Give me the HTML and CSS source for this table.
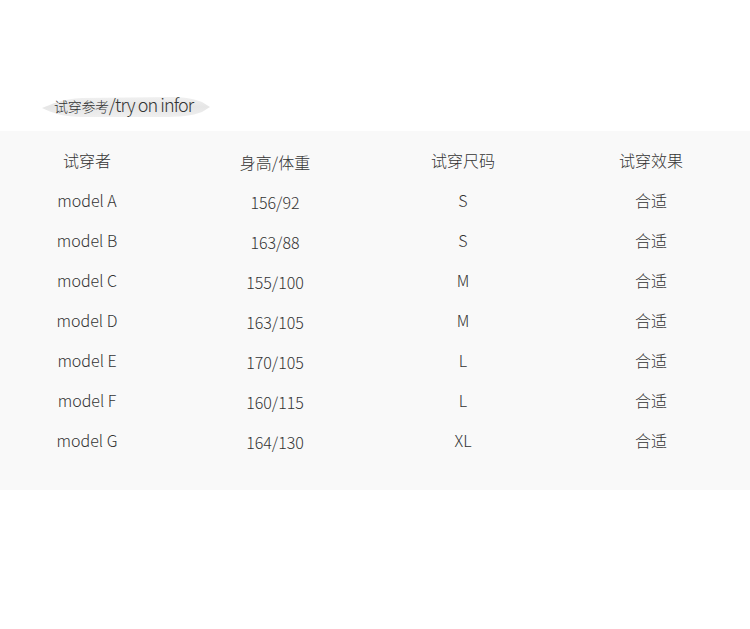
FILE: index.html
```html
<!DOCTYPE html>
<html lang="zh">
<head>
<meta charset="utf-8">
<link rel="stylesheet" href="styles.css">
</head>
<body>
<div class="page">
  <div class="title-wrap">
    <svg class="brush" width="168" height="24" viewBox="0 0 168 24" aria-hidden="true">
      <defs>
        <linearGradient id="g" x1="0" y1="0" x2="0" y2="1">
          <stop offset="0" stop-color="#f0f0f0"/>
          <stop offset="0.5" stop-color="#e6e6e6"/>
          <stop offset="1" stop-color="#efefef"/>
        </linearGradient>
      </defs>
      <path d="M0 13 C10 9 20 4 40 3 L130 2 C145 2 155 5 160 7 L168 12 L160 17 C150 21 138 22 120 22 L40 22 C22 22 10 18 0 13 Z" fill="url(#g)"/>
    </svg>
    <h2 class="title"><span class="cn">试穿参考</span><span class="en">/try on infor</span></h2>
  </div>
  <section class="panel">
    <div class="table">
      <div class="row head">
        <div class="cell">试穿者</div><div class="cell c2">身高/体重</div><div class="cell">试穿尺码</div><div class="cell">试穿效果</div>
      </div>
      <div class="row"><div class="cell">model A</div><div class="cell c2">156/92</div><div class="cell">S</div><div class="cell">合适</div></div>
      <div class="row"><div class="cell">model B</div><div class="cell c2">163/88</div><div class="cell">S</div><div class="cell">合适</div></div>
      <div class="row"><div class="cell">model C</div><div class="cell c2">155/100</div><div class="cell">M</div><div class="cell">合适</div></div>
      <div class="row"><div class="cell">model D</div><div class="cell c2">163/105</div><div class="cell">M</div><div class="cell">合适</div></div>
      <div class="row"><div class="cell">model E</div><div class="cell c2">170/105</div><div class="cell">L</div><div class="cell">合适</div></div>
      <div class="row"><div class="cell">model F</div><div class="cell c2">160/115</div><div class="cell">L</div><div class="cell">合适</div></div>
      <div class="row"><div class="cell">model G</div><div class="cell c2">164/130</div><div class="cell">XL</div><div class="cell">合适</div></div>
    </div>
  </section>
</div>
</body>
</html>
```
FILE: styles.css
```css
html, body {
  margin: 0;
  padding: 0;
  background: #ffffff;
}
body {
  font-family: "Noto Sans CJK SC", "Noto Sans", sans-serif;
  color: #333;
  width: 750px;
  height: 629px;
  overflow: hidden;
}
.page {
  padding-top: 90px;
}
.title-wrap {
  position: relative;
  margin-left: 42px;
  height: 41px;
}
.brush {
  position: absolute;
  left: 0;
  top: 5px;
}
.title {
  position: relative;
  margin: 0;
  padding-left: 12px;
  font-weight: 300;
  line-height: 24px;
  color: #333;
  white-space: nowrap;
}
.title .cn {
  font-size: 14px;
  letter-spacing: -0.3px;
}
.title .en {
  font-size: 18px;
  letter-spacing: -0.9px;
}
.panel {
  background: #f9f9f9;
  height: 359px;
  padding-top: 9px;
  box-sizing: border-box;
}
.table {
  margin-left: -7px;
}
.row {
  display: grid;
  grid-template-columns: repeat(4, 188px);
  height: 40px;
  align-items: center;
}
.cell {
  text-align: center;
  font-size: 16px;
  font-weight: 300;
  line-height: 28px;
  color: #333;
}
.c2 {
  padding-top: 4px;
}
```
